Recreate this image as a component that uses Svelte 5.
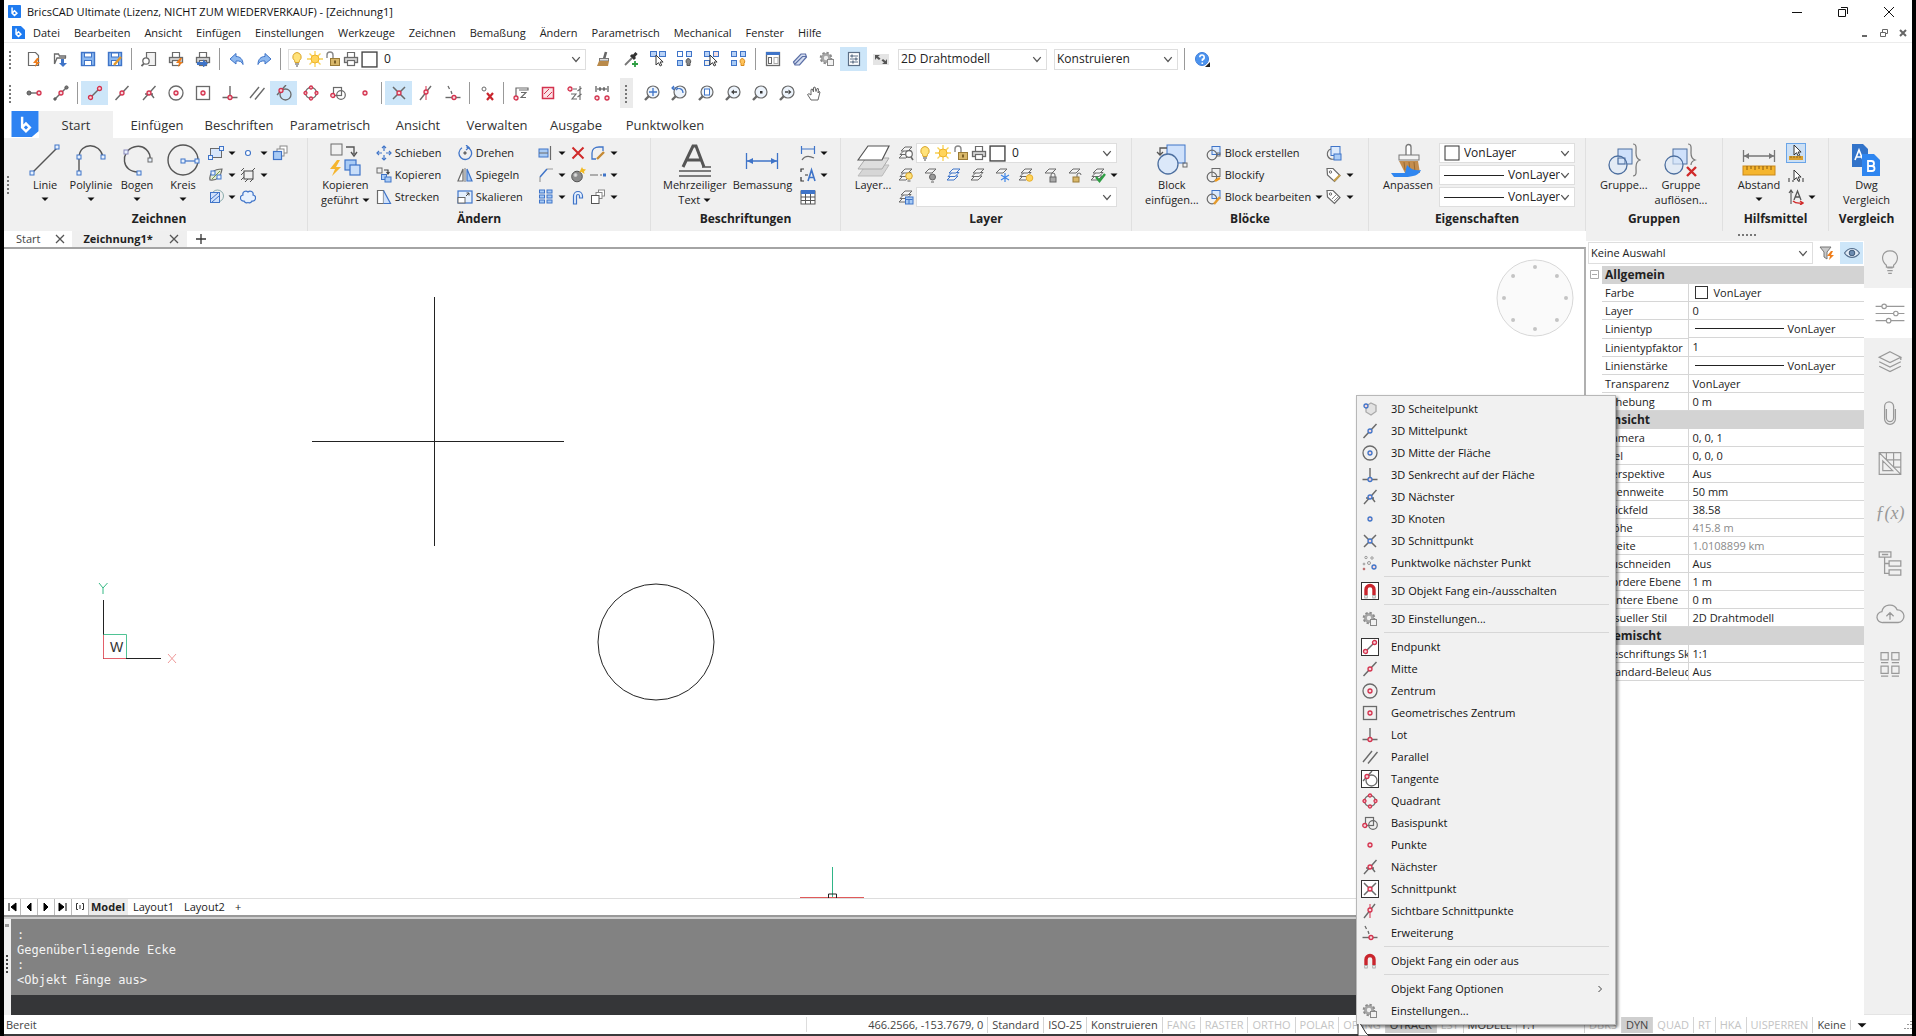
<script>
  const RED = '#d4324e', GRAY = '#6a6a6a', BLUE = '#3f74c8', LIGHT = '#a9cbf5', GOLD = '#f5b52e', BROWN = '#b98a4a';

  const p = (d, c = GRAY, w = 1, f = 'none') => `<path d="${d}" stroke="${c}" stroke-width="${w}" fill="${f}"/>`;
  const fill = (d, c = GRAY) => `<path d="${d}" fill="${c}"/>`;
  const dot = (x, y, c = RED, r = 2) => `<circle cx="${x}" cy="${y}" r="${r}" fill="#f6d5da" stroke="${c}" stroke-width="1.3"/>`;
  const ring = (x, y, r, c = GRAY, w = 1, f = 'none') => `<circle cx="${x}" cy="${y}" r="${r}" fill="${f}" stroke="${c}" stroke-width="${w}"/>`;
  const box = (x, y, w, h, c = GRAY, f = 'none', s = 1) => `<rect x="${x}" y="${y}" width="${w}" height="${h}" fill="${f}" stroke="${c}" stroke-width="${s}"/>`;
  const node = (x, y, c = BLUE) => box(x - 2, y - 2, 4, 4, c, '#e8f1fd');

  const snap = (kind, c = RED) => ({
    end: p('M4 12L12 4', GRAY, 1.5) + dot(3.5, 12.5, c) + dot(12.5, 3.5, c),
    mid: p('M1.500 15L14.500 1', GRAY, 1.5) + dot(8, 8, c),
    near: p('M2 15L14.500 1M10 9l3 4M4 9h8', GRAY, 1.4) + dot(8, 8, c),
    center: ring(8, 8, 7, GRAY, 1.3) + dot(8, 8, c),
    geo: box(1.5, 1.5, 13, 13, GRAY, 'none', 1.3) + dot(8, 8, c),
    perp: p('M8 1V12M.5 12.500H15.500', GRAY, 1.4) + dot(8, 12.5, c),
    par: p('M1 13L10 2M6 14.500L15.500 3', GRAY, 1.4),
    tan: ring(9.5, 9.5, 5.5, GRAY, 1.3) + p('M1 10L10 0', GRAY, 1.4) + dot(5, 5.5, c),
    quad: ring(8, 8, 5.5, GRAY, 1.3) + dot(8, 2.5, c, 1.5) + dot(8, 13.5, c, 1.5) + dot(2.5, 8, c, 1.5) + dot(13.5, 8, c, 1.5),
    base: box(3.5, 2.5, 8, 8, GRAY, 'none', 1.2) + ring(11, 10, 4.3, GRAY, 1.2) + dot(2.8, 10.5, c),
    point: dot(8, 8, c),
    cross: p('M2 2L14 14M14 2L2 14', GRAY, 1.5) + dot(8, 8, c),
    app: p('M2 15L13 1', GRAY, 1.4) + p('M8 1v14', c, 1) + dot(8, 7, c),
    ext: p('M3 1l1.500 3M6 6l1 3', GRAY, 1.3) + p('M.5 12.500H15.500', GRAY, 1.4) + dot(9, 12.5, c)
  })[kind];

  const gear = `<circle cx="7" cy="7" r="5" fill="#aaa" stroke="#8a8a8a" stroke-width="2.600" stroke-dasharray="2.200 1.700"/><circle cx="7" cy="7" r="4.500" fill="#a6a6a6"/><circle cx="7" cy="7" r="2.200" fill="#eee"/>` + box(8.5, 8.5, 6, 6, '#888', '#f2f2f2');
  const magnet = p('M4 12V6.500a4 4 0 0 1 8 0V12', '#c9252d', 3.4) + box(2.8, 12.5, 2.4, 2.5, '#999', '#fff', .8) + box(10.8, 12.5, 2.4, 2.5, '#999', '#fff', .8);
  const bulb = p('M8 1.500a4.500 4.500 0 0 0-2.500 8l.5 2h4l.5-2A4.500 4.500 0 0 0 8 1.500Z', '#d9a52b', 1, '#ffe27a') + p('M6 13h4M7 15h2', '#888', 1.3);
  const sun = p('M8 0V16M0 8H16M2.500 2.500L13.500 13.500M13.500 2.500L2.500 13.500', '#f7d154', 1.3) + ring(8, 8, 4, '#f0b429', 1, '#ffd45a');
  const lock = p('M2 7V4a3 3 0 0 1 6 0V8', '#888', 1.4) + box(5.5, 7.5, 9, 7, '#9a7b37', '#d8b76a') + fill('M9 9.500h2v3h-2z', '#7c6026');
  const printer = p('M4.500 6V1.500h7V6', GRAY, 1.2, '#fff') + box(1.5, 6.5, 13, 5, GRAY, '#d8d8d8', 1.3) + box(4.5, 9.5, 7, 5, GRAY, '#fff', 1.2);
  const swatch = box(1, 1, 14, 14, '#444', '#fff', 1.3);
  const cursor = (x, y) => p(`M${x} ${y}v10l2.500-2.300l1.700 3.300l1.500-.8l-1.600-3.200h3Z`, '#333', 1, '#fff');
  const quads = (a, b, c) => box(.5, .5, 5, 5, BLUE, a) + box(9.5, .5, 5, 5, BLUE, b) + box(.5, 9.5, 5, 5, BLUE, c);
  const lens = (inner) => p('M5.500 10.500L1 15', GRAY, 2.4) + ring(9, 7, 6, GRAY, 1.2, '#edf4fc') + inner;
  const sheet = (x, y, c = GRAY, f = '#f4f4f4') => p(`M${x} ${y + 4}L${x + 4} ${y}H${x + 11}L${x + 7} ${y + 4}Z`, c, 1, f);
  const sheets = (c = GRAY) => sheet(1, 9, c) + sheet(2, 5.5, c) + sheet(3, 2, c);

  const ic = {
    fresh: p('M2.500 1.500h7l3 3v10h-10Z', GRAY, 1.2, '#fff') + fill('M11 7l-4 5h3l-1 4l5-5h-3l2-4z', '#ef7d1a'),
    open: p('M1.500 13V3h4l1 2h6v2M1.500 13L4 7h9', GRAY, 1.3) + fill('M8 8h3v4h3l-4 4l-4-4h2z', BLUE),
    save: box(1.5, 1.5, 13, 13, BLUE, '#8bb8f0', 1.4) + box(4.5, 2, 7, 4, BLUE, '#fff') + box(4.5, 9.5, 7, 5, BLUE, '#fff'),
    saveas: box(1.5, 1.5, 13, 13, BLUE, '#8bb8f0', 1.4) + box(4.5, 2, 7, 4, BLUE, '#fff') + box(4.5, 9.5, 7, 5, BLUE, '#fff') + p('M7 14L14 6', '#e59a2b', 2.4),
    preview: p('M5.500 9V1.500h9v13h-7', GRAY, 1.2, '#f2f2f2') + ring(5, 10, 3.2, GRAY, 1.3, '#fff') + p('M3 12.500L.5 15', GRAY, 1.8),
    print: printer + fill('M12 7l-4 5h3l-1 4l5-5h-3l2-4z', '#ef7d1a'),
    publish: printer + fill('M2 11h6V8.500l5 4l-5 4V14H2z', BLUE),
    undo: p('M7 2.500L1 8l6 5V10c4-.5 6 1 7 3.500C14 8 11 5.500 7 5.500Z', BLUE, 1, '#8db8ef'),
    redo: p('M9 2.500L15 8l-6 5V10c-4-.5-6 1-7 3.500C2 8 5 5.500 9 5.500Z', BLUE, 1, '#8db8ef'),
    match: p('M10 1L8 8', '#666', 2.6) + box(3.5, 7.5, 9, 2.5, '#777', '#ddd') + fill('M3 10h10l-1 5H1z', BROWN),
    picker: p('M2 14L9 7', '#777', 1.8) + p('M8 4l4 4M10 6l3.500-4', '#333', 3) + p('M9 13h6M12 10v6', '#2f9e44', 1.8),
    selA: box(.5, .5, 6, 5, BLUE, '#b9d2f6') + box(9.5, .5, 6, 5, BLUE, '#b9d2f6') + cursor(6, 4),
    selB: quads('#fff', '#d7e5fa', LIGHT) + p('M11 7.500a3 3 0 0 0-1 5v2h3v-2a3 3 0 0 0-2-5', '#555', 1, '#888'),
    selC: quads('#b9d2f6', '#f3dde0', '#eee') + cursor(6, 4),
    selD: quads('#b9d2f6', '#b9d2f6', LIGHT) + p('M11 7.500a3 3 0 0 0-1 5v2h3v-2a3 3 0 0 0-2-5', '#d98b1c', 1, '#ffc35a'),
    panel: box(1.5, 1.5, 13, 13, GRAY, '#fff', 1.3) + fill('M1 1h14v3H1z', BLUE) + box(3.5, 6.5, 3, 6) + box(9, 6.5, 4, 6, '#aaa'),
    clip: p('M1.500 11L9 3h4.500l1 3L7.500 14H3Z', '#5b6fa5', 1.2, '#d6dff2') + p('M3 13L10.500 5.500h4', '#5b6fa5', 1.2),
    gear,
    props: box(2.5, 1.5, 11, 13, '#5c6f86', '#fff', 1.2) + p('M4 5h8M4 8h8M4 11h8', '#5c6f86') + p('M6 3.500v3M10 6.500v3M7 9.500v3', '#5c6f86', 1.4),
    swap: fill('M0 3h16v11H0z', '#e4e4e4') + fill('M2 4h5l-2 1.500l2.500 2l-1.500 1.500l-2.500-2L2 9zM14 13H9l2-1.500L8.500 9.500L10 8l2.500 2L14 8z', '#555'),
    help: ring(8, 8, 6.5, '#3d7edb', 1, '#4c93ee') + p('M5.800 6.200a2.200 2.200 0 1 1 2.600 2.200V10M8.300 11.500v1.500', '#fff', 1.6) + fill('M16 11v5h-5z', '#222'),
    tmp: p('M4 8h8', GRAY, 1.4) + ring(3, 8, 2, '#555', 1, '#777') + dot(13, 8),
    from: p('M2 14L14 2', GRAY, 1.4) + ring(13.500, 2.500, 1.6, '#555', 1, '#777') + ring(2, 14, 1.2, '#555', 1, '#777') + dot(8, 8),
    none: ring(5, 4, 2, GRAY) + p('M8 8l6 7M14 8l-6 7', '#c9252d', 2.2),
    z1: p('M3 11V3h12v2h-9', GRAY, 1.2) + p('M8 7.500h5l-5 5h5', GRAY, 1.1) + dot(3, 13),
    hatch: box(2.5, 2.5, 11, 11, RED, '#fbe3e6', 1.5) + p('M4 9L9 4M7 12L12 7', RED),
    z2: p('M6 4h4M13 1v14M10.500 6l4-3M10.500 12l4-3', GRAY, 1.1) + p('M4 9h5l-4 5h5', GRAY, 1.1) + dot(3, 4),
    gap: p('M2 1v6M14 1v6M3 4h10M6 2v4M10 2v4', '#444', 1.1) + dot(3, 13) + dot(13, 13),
    zE: lens(p('M9 3v8M5 7h8', BLUE, 1.3)), zR: lens(p('M5 5c3-3 7-1 7 3M1 3h6M3 1l-2 2l2 2', BLUE, 1.2)),
    zP: lens(box(6.5, 4, 5, 6, BLUE, '#fff')), zL: lens(fill('M6 7l3-2.500V9.500zM8 6.300h4v1.400H8z', '#444')),
    zC: lens(fill('M8 6h2.500v2.500H8z', '#333')), zN: lens(fill('M12.500 7l-3-2.500V9.500zM6 6.300h4v1.400H6z', '#444')),
    hand: p('M5 15L1.500 9.500l1.500-.8L5 10V4.500l1.300-.5L7.500 7V2.500L9 2l1 4.500l1-3l1.500.3L12 8l1-1.500l1 .5L12 15Z', '#666', 1, '#fff'),
    rect: box(2.5, 3.5, 11, 9, GRAY, '#d7e6fb') + node(2.5, 12.5) + node(13.5, 3.5),
    pt: ring(8, 8, 2.5, BLUE, 1.1, '#fff'),
    stack: box(8, 1, 7, 7, '#888', '#fff') + box(5, 4, 7, 7, '#888', '#fff') + box(1.5, 6.5, 8, 8, BLUE, LIGHT, 1.2),
    spline: p('M2 13C1 6 6 2 14 2C13 9 9 14 2 13Z', GRAY, 1.2, '#e3ead6') + node(5, 6) + node(11, 10) + p('M4 12L12 4', '#7a9a4a'),
    region: box(4, 4, 9, 8, '#444') + p('M1 4l3-3M1 8l3-3M1 13l3-3M5 15l3-3M10 15l3-3M12 4l3-3', '#555', 1),
    fillh: ring(9.500, 7, 6, '#8aa', 1) + box(2.500, 3.500, 9, 10, BLUE, '#cfe1fb') + p('M3 10L10 4M4 13L11 7', BLUE),
    cloud: p('M4 12a3 3 0 0 1-1-6a3 3 0 0 1 5-3a3 3 0 0 1 5 3a3 3 0 0 1-1 6a3 3 0 0 1-4 1.500a3 3 0 0 1-4-1.500Z', BLUE, 1.2, '#e8f1fd'),
    move: p('M8 1v5M8 10v5M1 8h5M10 8h5', BLUE, 1.2) + p('M6 3l2-2l2 2M6 13l2 2l2-2M3 6l-2 2l2 2M13 6l2 2l-2 2', BLUE, 1.2),
    copy: box(1, 1, 5, 5) + p('M8 3h4v3M10.500 5l1.500 2l1.500-2', '#444', 1.2) + box(5.5, 7.5, 5, 5, BLUE, LIGHT) + box(9, 10, 6, 5, BLUE, LIGHT),
    stretch: p('M1.500 1.500h6v13h-6Z', GRAY, 1.2, '#fff') + p('M7.500 1.500L14.500 14.500H7.500', BLUE, 1.2, '#cfe1fb'),
    rotate: p('M5 2.800A6.300 6.300 0 1 0 9.500 2', BLUE, 1.3) + p('M9 0L12 2.500L9 5', BLUE, 1.2) + ring(8, 8, 1.2, GRAY, 1, '#666'),
    mirror: p('M6 2v12H1Z', GRAY, 1.2, '#fff') + p('M10 2v12h5Z', BLUE, 1.2, LIGHT) + p('M8 1v14', '#555', .8),
    scale: box(1, 2, 14, 12, BLUE, '#e4effc', 1.2) + box(1, 8.5, 7, 5.5, GRAY, '#fff') + p('M9 7l3-3M9.500 4H12v2.500', '#444'),
    trim: box(1, 4, 9, 8, BLUE, LIGHT) + p('M1 8h9', GRAY) + p('M12.500 1v14', GRAY, 1.2),
    del: p('M2.500 2.500L13.500 13.500M13.500 2.500L2.500 13.500', '#d02a2a', 2),
    fillet: p('M6 14H2V8C2 4 5 2 9 2h4v4', BLUE, 1.3) + p('M7 14L14 7', '#c58a35', 2.4),
    chamfer: p('M2 15V10M9 2h6', '#999', 1.2) + p('M2 10L9 2', BLUE, 1.5),
    bomb: ring(7, 9.500, 5.300, '#555', 1, '#8c8c8c') + ring(5.500, 8, 1.5, '#ccc', 1, '#ddd') + fill('M12 0l1 2l3 .5l-2 2l.5 2.500l-3-2l-2 .5l1-2.500z', '#f2b91f'),
    dashl: p('M0 8h8M10 8h2', GRAY, 1.2) + fill('M13 6.500h3v3h-3z', BLUE),
    array: [1.5, 6.5, 11.5].map((y) => box(1.5, y - .5, 5, 3, BLUE, LIGHT) + box(9, y - .5, 5, 3, BLUE, LIGHT)).join(''),
    offset: p('M3.500 15V7a4.500 4.500 0 0 1 9 0v2H9.500V7a1.500 1.500 0 0 0-3 0V15Z', BLUE, 1.2, '#e6f0fd'),
    order: box(8.5, 1, 6, 6, '#888', '#fff') + box(6, 3.5, 6, 6, '#888', '#fff') + box(1.5, 6.5, 7.5, 8, '#555', '#fff'),
    dimq: p('M1.500 1v8M14.500 1v8M2 4h12', BLUE, 1.2) + p('M2 15c3-5 8-4 12-2', GRAY, 1.2),
    leader: p('M1 5V2h3M1 10v4h3M5 8h3', '#333', 1.2) + p('M8 14L11.500 3L15 14M9 10.500h5', BLUE, 1.6),
    table: box(1, 2, 14, 13, '#555', '#fff') + fill('M1 1h14v4H1z', BLUE) + p('M1 8h14M1 11.500h14M5.500 5v10M10.500 5v10', '#555'),
    lsearch: sheets() + ring(11, 9, 3.3, GRAY, 1.2, '#fff') + p('M13 12l2 3', GRAY, 1.6),
    lbulb: sheets() + ring(11, 9, 3.3, '#d9a52b', 1, '#ffe27a') + p('M9.500 14h3', '#888', 1.4),
    loff: sheet(3, 2) + ring(10.500, 10, 3, '#666', 1, '#999') + p('M9 15h3', '#888', 1.4),
    lblue: sheets(BLUE), lgray: sheets(),
    lfreeze: sheet(2, 2) + p('M11 6v9M7 8l8 5M15 8l-8 5', '#3f86e8', 1.2),
    lsun: sheets() + ring(11.500, 11, 3.3, '#eab02c', 1, '#ffd45a'),
    llock: sheet(3, 2) + p('M9 10V8a2 2 0 0 1 4 0v2', '#666') + box(8, 10, 6, 5, '#666', '#aaa'),
    lunlock: sheet(3, 2) + p('M11 10V8a2 2 0 0 1 4 0', '#666') + box(7, 10, 6, 5, '#9a7b37', '#d8b76a'),
    lcheck: sheets() + p('M6 10l3.500 4L15 7', '#2f9e44', 2.4),
    lsave: sheets() + box(7.500, 8, 7.500, 7, BLUE, LIGHT) + p('M7.500 10.500h7M11 10v5', BLUE),
    bnew: box(6, 1.5, 8, 8, BLUE, '#dceafc') + ring(6, 10, 4.8, GRAY, 1.2, 'none') + box(11, 8, 3, 3),
    bconv: box(6, 1.5, 8, 8, GRAY, '#eee') + ring(6, 10, 4.8, GRAY, 1.2) + p('M9 14l5-3', '#ef9a1a', 2.4),
    bedit: box(6, 1.5, 8, 8, BLUE, '#dceafc') + ring(6, 10, 4.8, GRAY, 1.2) + p('M8 15l6-7', '#e59a2b', 2.4),
    bsave: box(5, 1.5, 9, 9, BLUE, '#dceafc') + p('M5 4a5 5 0 1 0 3 10', GRAY, 1.2) + box(8, 9, 7, 6, BLUE, LIGHT),
    tagE: p('M1 1.500h6l7 7l-5.500 6L1.500 8Z', GRAY, 1.2, '#fff') + ring(4.500, 5, 1.2) + p('M8 14l6-6', '#c9a14a', 2),
    tag: p('M1 1.500h6l7 7l-5.500 6L1.500 8Z', GRAY, 1.2, '#fff') + ring(4.500, 5, 1.2) + p('M6 10l4-4M8 12l4-4', '#888'),
    mA: cursor(6, 0) + fill('M1 11h14v4H1z', '#d9a032') + p('M3 11v2M6 11v2M9 11v2M12 11v2', '#7c5a15', .8),
    mB: p('M1 11v4M5 13v2M11 13v2M15 11v4', '#333', 1) + cursor(6, 3),
    mC: p('M3 15V2M1 4l2-3l2 3', '#555', 1.1) + p('M6 11L9.500 2L13 11M7 8h5', '#555', 1.3) + p('M5 12c3 3 6 2 9 2M12 12l3 2l-3 2', '#d02a2a', 1.4),
    filter: p('M1 2h11l-4 5v7l-3-2V7Z', '#777', 1, '#c9c9c9') + fill('M12 6l-4 5h3l-1 4l5-5h-3l2-4z', '#ef7d1a'),
    eye: p('M.500 8c4-6 11-6 15 0c-4 6-11 6-15 0Z', '#56708f', 1.2, '#dfe9f4') + ring(8, 8, 2.8, '#3d5777', 1, '#6d8cb0'),
    vertex3: p('M9 2l5 2.500v6L9 14l-5-3V5Z', '#aaa', 1.3, '#e2e2e2') + dot(4, 5, BLUE),
    cloudpts: ring(4, 2.5, 1.2, '#999') + ring(10, 3, 1.2, '#999') + ring(7, 8, 1.5, '#999') + ring(2, 9, .9, '#999') + ring(2, 14, .9, '#b66', 1, '#b66') + dot(12, 12, BLUE),
    magnet
  };

  const big = {
    line: p('M4 30L29 5', '#555', 1.4) + node(4, 30) + node(29, 4),
    poly: p('M5 30V14C6 -1 26 -1 29 14', '#555', 1.4) + node(5, 30) + node(5, 14) + node(29, 14),
    arc: p('M19 29C1 30 0 8 14 4C24 1 31 9 30 17', '#555', 1.4) + node(19, 30) + node(30, 17, GRAY) + node(6, 9, '#88b'),
    circle: ring(17, 17, 15, '#555', 1.4) + p('M17 18H31', BLUE, 1.2) + node(17, 18) + node(31, 18),
    gcopy: box(3, 1, 11, 11) + p('M18 4h8v7M23 9l3 4l3-4', '#555', 1.4) + fill('M9 17l-7 9h5l-3 7l9-9h-5l4-7z', GOLD) + box(17, 17, 11, 10, BLUE, LIGHT, 1.2) + box(22, 22, 10, 10, BLUE, '#c9def9', 1.2),
    mtext: p('M5 24L15 3h3l8 21M9 17h15', '#555', 3) + p('M1 28h32M1 33h32M24 24h9', '#555', 1.4),
    dim: p('M1.500 10v16M32.500 10v16M2 18h30', BLUE, 1.3) + fill('M2 18l6-3v6zM32 18l-6-3v6z', BLUE),
    layer: p('M2 33L10 22H33L26 33Z', '#bbb', 1, '#d6d6d6') + p('M2 26L10 15H33L26 26Z', '#aaa', 1, '#dedede') + p('M2 17L12 3H33L26 17Z', '#555', 1.2, '#fff'),
    block: box(12, 2, 18, 18, BLUE, '#cfe1fb') + ring(13, 21, 10, '#4d6f9f', 1.3, '#dbe8f9') + p('M12 5H5v7M2 9l3 3l3-3', '#555', 1.3) + box(28, 20, 4, 4),
    brush: p('M15 12V4a2 2 0 0 1 5 0V12', '#777', 1.3, '#fff') + box(8, 12, 20, 5, '#777', '#f3f3f3') + fill('M8 18h19l2 12H14z', '#c48d4e') + p('M13 19l1 8M18 19l1 10M23 19l1 10', '#9a6a30') + fill('M0 30h14l2-8c4 5 10 6 14 5c-2 5-8 7-16 7H3z', '#2f86f0'),
    group: box(11, 6, 14, 15, '#4d6f9f', '#cfe1fb') + ring(11, 22, 9, '#4d6f9f', 1.3, '#dbe8f999') + box(11, 15, 7, 6, '#4d6f9f') + p('M26 1c4 0 3 4 3 9c0 4 1 6 4 7c-3 1-4 3-4 7c0 5 1 9-3 9', '#777', 1.2),
    ungroup: box(9, 6, 14, 15, '#4d6f9f', '#cfe1fb') + ring(10, 22, 9, '#4d6f9f', 1.3, '#dbe8f999') + p('M24 1c4 0 3 4 3 9c0 4 1 6 4 7c-3 1-4 3-4 5', '#777', 1.2) + p('M23 24l9 9M32 24l-9 9', '#d02a2a', 2.4),
    dist: p('M1.500 7v12M32.500 7v12M2 13h30', '#777', 1.3) + fill('M2 13l5-3v6zM32 13l-5-3v6z', '#777') + box(1, 23, 32, 9, '#c9881a', GOLD) + p('M5 23v4M9 23v3M13 23v4M17 23v3M21 23v4M25 23v3M29 23v4', '#8a5b0c'),
    dwg: fill('M3 1h11l5 5v18H3z', '#3273c9') + p('M6 17l4-10l4 10M7.500 14h5', '#fff', 1.6) + fill('M13 11h12l6 6v16H13z', '#2f86f0') + p('M19 18v10h4a2.500 2.500 0 0 0 0-5h-4h3.500a2.500 2.500 0 0 0 0-5Z', '#fff', 1.8)
  };

  const side = [
    p('M17 21h6M17 24h6M18 27h4M16 18C9 12 11 2 20 2s11 10 4 16v2h-8Z', '#999', 1.3),
    p('M4 8h7M16 8h20M4 16h20M29 16h7M4 24h12M21 24h15', '#999', 1.3) + ring(13.500, 8, 2.500, '#999', 1.3) + ring(26.500, 16, 2.500, '#999', 1.3) + ring(18.500, 24, 2.500, '#999', 1.3),
    p('M20 3L32 9L20 15L8 9ZM8 14l12 6l12-6M8 19l12 6l12-6M32 9v3', '#999', 1.4),
    p('M16 11v10a4 4 0 0 0 8 0V8a5 5 0 0 0-10 0v14a6 6 0 0 0 12 0V11', '#999', 1.4),
    p('M8 4h24v24H8ZM8 4L32 28M16 4v8M24 4v16M16 12h16M24 20h8M12 13v11h11Z', '#999', 1.3),
    '',
    p('M8 3h13v6H8ZM11 6h7M14 9v18h5M14 16h5M19 13h13v6H19ZM19 23h13v6H19Z', '#999', 1.4),
    p('M13 26H12a6 6 0 0 1-1-12a9 9 0 0 1 17-2a7 7 0 0 1 1 14H13M20 23V15M16 19l4-4l4 4', '#999', 1.4),
    p('M10 4h8v8h-8ZM22 4h8v8h-8ZM10 19h8v8h-8ZM22 19h8v8h-8ZM10 15h8M22 15h8M10 30h8M22 30h8', '#999', 1.3)
  ];
  const sideNames = ['Tipps', 'Eigenschaften', 'Layer', 'Anhänge', 'Schraffur', 'Parameter', 'Struktur', 'Cloud', 'Komponenten'];

  const menus = ['Datei', 'Bearbeiten', 'Ansicht', 'Einfügen', 'Einstellungen', 'Werkzeuge', 'Zeichnen', 'Bemaßung', 'Ändern', 'Parametrisch', 'Mechanical', 'Fenster', 'Hilfe'];
  const bar1 = ['fresh', 'open', 'save', 'saveas', '|', 'preview', 'print', 'publish', '|', 'undo', 'redo', '|'];
  const bar1b = ['match', 'picker', 'selA', 'selB', 'selC', 'selD', '|', 'panel', 'clip', 'gear', '*props', 'swap'];
  const bar2 = ['tmp', 'from', '|', '*end', 'mid', 'near', 'center', 'geo', 'perp', 'par', '*tan', 'quad', 'base', 'point', '|', '*cross', 'app', 'ext', '|', 'none', '|', 'z1', 'hatch', 'z2', 'gap'];
  const bar3 = ['zE', 'zR', 'zP', 'zL', 'zC', 'zN', 'hand'];
  const tabs = ['Start', 'Einfügen', 'Beschriften', 'Parametrisch', 'Ansicht', 'Verwalten', 'Ausgabe', 'Punktwolken'];
  const layerTools = ['lbulb', 'loff', 'lblue', 'lgray', 'lfreeze', 'lsun', 'llock', 'lunlock', 'lcheck'];

  const props = [
    ['Allgemein'], ['Farbe', 'VonLayer', 'swatch'], ['Layer', '0'], ['Linientyp', 'VonLayer', 'line'], ['Linientypfaktor', '1'],
    ['Linienstärke', 'VonLayer', 'line'], ['Transparenz', 'VonLayer'], ['Erhebung', '0 m'],
    ['Ansicht'], ['Kamera', '0, 0, 1'], ['Ziel', '0, 0, 0'], ['Perspektive', 'Aus'], ['Brennweite', '50 mm'], ['Blickfeld', '38.58'],
    ['Höhe', '415.8 m', 'dim'], ['Breite', '1.0108899 km', 'dim'], ['Zuschneiden', 'Aus'], ['Vordere Ebene', '1 m'], ['Hintere Ebene', '0 m'], ['Visueller Stil', '2D Drahtmodell'],
    ['Gemischt'], ['Beschriftungs Sk', '1:1'], ['Standard-Beleuc', 'Aus']
  ];

  const popup = [
    ['3D Scheitelpunkt', ic.vertex3], ['3D Mittelpunkt', snap('mid', BLUE)], ['3D Mitte der Fläche', snap('center', BLUE)],
    ['3D Senkrecht auf der Fläche', snap('perp', BLUE)], ['3D Nächster', snap('near', BLUE)], ['3D Knoten', snap('point', BLUE)],
    ['3D Schnittpunkt', snap('cross', BLUE)], ['Punktwolke nächster Punkt', ic.cloudpts], null,
    ['3D Objekt Fang ein-/ausschalten', magnet, true], null, ['3D Einstellungen...', gear], null,
    ['Endpunkt', snap('end'), true], ['Mitte', snap('mid')], ['Zentrum', snap('center')], ['Geometrisches Zentrum', snap('geo')],
    ['Lot', snap('perp')], ['Parallel', snap('par')], ['Tangente', snap('tan'), true], ['Quadrant', snap('quad')], ['Basispunkt', snap('base')],
    ['Punkte', snap('point')], ['Nächster', snap('near')], ['Schnittpunkt', snap('cross'), true], ['Sichtbare Schnittpunkte', snap('app')],
    ['Erweiterung', snap('ext')], null, ['Objekt Fang ein oder aus', magnet], null,
    ['Objekt Fang Optionen', '', false, true], ['Einstellungen...', gear]
  ];

  const stateA = [['Standard', 1], ['ISO-25', 1], ['Konstruieren', 1], ['FANG', 0], ['RASTER', 0], ['ORTHO', 0], ['POLAR', 0], ['OFANG', 0], ['OTRACK', 2], ['LST', 0], ['MODELL', 1], ['1:1', 1]];
  const stateB = [['DBKS', 0], ['DYN', 2], ['QUAD', 0], ['RT', 0], ['HKA', 0], ['UISPERREN', 0], ['Keine', 1]];
</script>

{#snippet icon(code, cls = 'i16')}
  <svg class={cls} viewBox="0 0 16 16" aria-hidden="true">{@html code}</svg>
{/snippet}

{#snippet chev()}
  <svg class="chev" viewBox="0 0 8 8" aria-hidden="true"><path d="M1 2.500L4 6L7 2.500" fill="none" stroke="#555" /></svg>
{/snippet}

{#snippet tri()}
  <svg class="tri" viewBox="0 0 8 8" aria-hidden="true"><path d="M.5 2.500h7L4 6z" fill="#111" /></svg>
{/snippet}

{#snippet tools(list)}
  {#each list as t}
    {#if t === '|'}
      <span class="sep"></span>
    {:else}
      {@const n = t.replace('*', '')}
      <button class="tool" class:on={t[0] === '*'} aria-label={n}>{@render icon(ic[n] ?? snap(n))}</button>
    {/if}
  {/each}
{/snippet}

{#snippet bigBtn(name, lines, arrow = '')}
  <button class="big">
    <svg class="i34" viewBox="0 0 34 34" aria-hidden="true">{@html big[name]}</svg>
    <span>{lines[0]}</span>
    {#if lines[1] || arrow}
      <span class="second">{lines[1] ?? ''}{#if arrow}{@render tri()}{/if}</span>
    {/if}
  </button>
{/snippet}

{#snippet small(name, arrow = false, label = '', on = false)}
  <button class="small" class:lit={on} aria-label={label || name}>{@render icon(ic[name])}{#if label}<span>{label}</span>{/if}{#if arrow}{@render tri()}{/if}</button>
{/snippet}

{#snippet layerCombo()}
  <div class="combo layers">
    {@render icon(bulb)}{@render icon(sun)}{@render icon(lock)}{@render icon(printer)}{@render icon(swatch, 'i18')}
    <select aria-label="Aktueller Layer"><option>0</option></select>
    {@render chev()}
  </div>
{/snippet}

<div class="app">
  <header class="title">
    <svg class="i13" viewBox="0 0 16 16" aria-hidden="true"><rect width="16" height="16" rx="1" fill="#1f7bf0" /><path d="M5 3v7l3 3l3-3l-3-3l-3 3" stroke="#fff" stroke-width="1.800" fill="none" /></svg>
    <span class="name">BricsCAD Ultimate (Lizenz, NICHT ZUM WIEDERVERKAUF) - [Zeichnung1]</span>
    <div class="winctl">
      <button aria-label="Minimieren"><svg viewBox="0 0 12 12"><path d="M1 6.500h10" stroke="#111" /></svg></button>
      <button aria-label="Wiederherstellen"><svg viewBox="0 0 12 12"><path d="M1.500 3.500h7v7h-7zM4 1.500h6.500V8" stroke="#111" fill="none" /></svg></button>
      <button aria-label="Schließen"><svg viewBox="0 0 12 12"><path d="M1 1l10 10M11 1L1 11" stroke="#111" /></svg></button>
    </div>
  </header>

  <nav class="menubar">
    <svg class="i13" viewBox="0 0 16 16" aria-hidden="true"><path d="M0 0h11l5 5v11H0z" fill="#1f7bf0" /><path d="M5 3v7l3 3l3-3l-3-3l-3 3" stroke="#fff" stroke-width="1.800" fill="none" /></svg>
    {#each menus as m}<button>{m}</button>{/each}
    <div class="docctl">
      <button aria-label="Dokument minimieren"><svg viewBox="0 0 12 12"><path d="M3 9h5" stroke="#666" stroke-width="2" /></svg></button>
      <button aria-label="Dokument wiederherstellen"><svg viewBox="0 0 12 12"><path d="M2.500 5.500h5v4h-5zM4.500 5V2.500h5v4H8" stroke="#666" fill="none" /></svg></button>
      <button aria-label="Dokument schließen"><svg viewBox="0 0 12 12"><path d="M3 3l6 6M9 3L3 9" stroke="#666" stroke-width="2" /></svg></button>
    </div>
  </nav>

  <div class="bar first">
    <span class="grip"></span>
    {@render tools(bar1)}
    {@render layerCombo()}
    {@render tools(bar1b)}
    <div class="combo style"><select aria-label="Visueller Stil"><option>2D Drahtmodell</option></select>{@render chev()}</div>
    <div class="combo space"><select aria-label="Arbeitsbereich"><option>Konstruieren</option></select>{@render chev()}</div>
    {@render tools(['|', 'help'])}
  </div>

  <div class="bar">
    <span class="grip"></span>
    {@render tools(bar2)}
    <span class="grip mid"></span>
    {@render tools(bar3)}
  </div>

  <div class="tabs" role="tablist">
    <button class="logo" aria-label="BricsCAD"><svg viewBox="0 0 28 28"><path d="M0 0h28v21l-7 6H0z" fill="#2e83f2" /><path d="M11 6v11l4 4l4-4l-4-4l-4 4" stroke="#fff" stroke-width="2.500" fill="none" /></svg></button>
    {#each tabs as t, i}<button role="tab" aria-selected={i === 0} class:active={i === 0}>{t}</button>{/each}
  </div>

  <div class="ribbon">
    <span class="grip rg"></span>
    <div class="groups">
      <section>
        <div class="body g-draw">
          {@render bigBtn('line', ['Linie'], 'y')}
          {@render bigBtn('poly', ['Polylinie'], 'y')}
          {@render bigBtn('arc', ['Bogen'], 'y')}
          {@render bigBtn('circle', ['Kreis'], 'y')}
          <div class="col">{@render small('rect', true)}{@render small('spline', true)}{@render small('fillh', true)}</div>
          <div class="col">{@render small('pt', true)}{@render small('region', true)}{@render small('cloud')}</div>
          <div class="col">{@render small('stack')}</div>
        </div>
        <h2>Zeichnen</h2>
      </section>
      <section>
        <div class="body g-mod">
          {@render bigBtn('gcopy', ['Kopieren', 'geführt'], 'y')}
          <div class="col w81">{@render small('move', false, 'Schieben')}{@render small('copy', false, 'Kopieren')}{@render small('stretch', false, 'Strecken')}</div>
          <div class="col w81">{@render small('rotate', false, 'Drehen')}{@render small('mirror', false, 'Spiegeln')}{@render small('scale', false, 'Skalieren')}</div>
          <div class="col">{@render small('trim', true)}{@render small('chamfer', true)}{@render small('array', true)}</div>
          <div class="col">{@render small('del')}{@render small('bomb')}{@render small('offset')}</div>
          <div class="col">{@render small('fillet', true)}{@render small('dashl', true)}{@render small('order', true)}</div>
        </div>
        <h2>Ändern</h2>
      </section>
      <section>
        <div class="body g-ann">
          {@render bigBtn('mtext', ['Mehrzeiliger', 'Text'], 'y')}
          {@render bigBtn('dim', ['Bemassung'])}
          <div class="col">{@render small('dimq', true)}{@render small('leader', true)}{@render small('table')}</div>
        </div>
        <h2>Beschriftungen</h2>
      </section>
      <section>
        <div class="body g-lay">
          {@render bigBtn('layer', ['Layer...'])}
          <div class="col grow">
            <div class="line">{@render small('lsearch')}{@render layerCombo()}</div>
            <div class="line spread">{#each layerTools as l, i}{@render small(l, i === 8)}{/each}</div>
            <div class="line">{@render small('lsave')}<div class="combo"><select aria-label="Layerstatus"><option></option></select>{@render chev()}</div></div>
          </div>
        </div>
        <h2>Layer</h2>
      </section>
      <section>
        <div class="body g-blk">
          {@render bigBtn('block', ['Block', 'einfügen...'])}
          <div class="col">{@render small('bnew', false, 'Block erstellen')}{@render small('bconv', false, 'Blockify')}{@render small('bedit', true, 'Block bearbeiten')}</div>
          <div class="col">{@render small('bsave')}{@render small('tagE', true)}{@render small('tag', true)}</div>
        </div>
        <h2>Blöcke</h2>
      </section>
      <section>
        <div class="body g-prp">
          {@render bigBtn('brush', ['Anpassen'])}
          <div class="col grow">
            <div class="combo">{@render icon(box(1, 1, 14, 14, '#333', '#fff'))}<select aria-label="Farbe"><option>VonLayer</option></select>{@render chev()}</div>
            <div class="combo"><i class="rule"></i><select class="vl" aria-label="Linientyp"><option>VonLayer</option></select>{@render chev()}</div>
            <div class="combo"><i class="rule"></i><select class="vl" aria-label="Linienstärke"><option>VonLayer</option></select>{@render chev()}</div>
          </div>
        </div>
        <h2>Eigenschaften</h2>
      </section>
      <section>
        <div class="body g-grp">
          {@render bigBtn('group', ['Gruppe...'])}
          {@render bigBtn('ungroup', ['Gruppe', 'auflösen...'])}
        </div>
        <h2>Gruppen</h2>
      </section>
      <section>
        <div class="body g-utl">
          {@render bigBtn('dist', ['Abstand'], 'y')}
          <div class="col">{@render small('mA', false, '', true)}{@render small('mB')}{@render small('mC', true)}</div>
        </div>
        <h2>Hilfsmittel</h2>
      </section>
      <section>
        <div class="body g-cmp">{@render bigBtn('dwg', ['Dwg', 'Vergleich'])}</div>
        <h2>Vergleich</h2>
      </section>
    </div>
  </div>

  <div class="main">
    <div class="work">
      <div class="doctabs">
        <button>Start</button><button class="x" aria-label="Start schließen"><svg viewBox="0 0 10 10"><path d="M1 1l8 8M9 1L1 9" stroke="#555" stroke-width="1.300" /></svg></button>
        <button class="cur">Zeichnung1*</button><button class="x lit2" aria-label="Zeichnung1 schließen"><svg viewBox="0 0 10 10"><path d="M1 1l8 8M9 1L1 9" stroke="#555" stroke-width="1.300" /></svg></button>
        <button class="x" aria-label="Neue Zeichnung"><svg viewBox="0 0 10 10"><path d="M0 5h10M5 0v10" stroke="#333" stroke-width="1.300" /></svg></button>
      </div>
      <div class="canvas">
        <svg class="drawing" aria-label="Zeichnung">
          <g fill="none" stroke="#222" shape-rendering="crispEdges">
            <path d="M430.500 48V297M308 192.500H560" />
            <path d="M99.500 351V409.500H157" />
          </g>
          <circle cx="652" cy="393" r="58" fill="none" stroke="#222" />
          <path d="M99.500 385.500H122.500V409" fill="none" stroke="#4fc394" />
          <path d="M99.500 386V409.500H122" fill="none" stroke="#e2606a" />
          <text x="106" y="403" class="wcs">W</text>
          <path d="M95 334l4 5v6M103.500 334l-4.500 5" fill="none" stroke="#35b984" />
          <path d="M164 405l8 9M172 405l-8 9" fill="none" stroke="#ef9a9a" />
          <path d="M828.500 618v30" stroke="#2fb587" />
          <path d="M796 648.500h64" stroke="#e05a5a" />
          <path d="M824.500 649v-4h8v4" fill="none" stroke="#222" />
        </svg>
        <svg class="look" viewBox="0 0 78 78" aria-hidden="true">
          <circle cx="39" cy="39" r="38" fill="#fafafa" stroke="#d8d8d8" />
          {#each [0, 45, 90, 135, 180, 225, 270, 315] as a}
            <circle cx={39 + 31 * Math.cos((a * Math.PI) / 180)} cy={39 + 31 * Math.sin((a * Math.PI) / 180)} r="2" fill="#c4c4c4" />
          {/each}
        </svg>
      </div>
      <div class="sheets">
        {#each ['M2 1v8M9 1L4 5l5 4z', 'M7 1L3 5l4 4z', 'M3 1l4 4l-4 4z', 'M8 1v8M1 1l5 4l-5 4z'] as d}
          <button class="nav" aria-label="Blättern"><svg viewBox="0 0 10 10"><path {d} fill="#000" stroke="#000" /></svg></button>
        {/each}
        <button class="nav" aria-label="Liste"><svg viewBox="0 0 10 10"><path d="M3 1.500H1.500v6H3M7 1.500h1.500v6H7M5 3v4" fill="none" stroke="#333" /></svg></button>
        <button class="model">Model</button><button>Layout1</button><button>Layout2</button><button>+</button>
      </div>
      <div class="cmd">
        <div class="cmdgrip"><svg viewBox="0 0 7 76"><path d="M1 5h4v3H1z" fill="#999" /><path d="M3 36v20" stroke="#444" stroke-width="2" stroke-dasharray="2 2" /></svg></div>
        <div class="console">
          <div class="log"><p>:</p><p>Gegenüberliegende Ecke</p><p>:</p><p>&lt;Objekt Fänge aus&gt;</p></div>
          <input aria-label="Befehlszeile" />
        </div>
      </div>
    </div>

    <aside class="panel">
      <div class="phandle"></div>
      <div class="picker">
        <div class="combo sel"><select aria-label="Auswahl"><option>Keine Auswahl</option></select>{@render chev()}</div>
        <button aria-label="Filter">{@render icon(ic.filter)}</button>
        <button class="on" aria-label="Anzeigen">{@render icon(ic.eye)}</button>
      </div>
      <table>
        <colgroup><col class="c1" /><col class="c2" /><col /></colgroup>
        <tbody>
          {#each props as [k, v, kind]}
            {#if v === undefined}
              <tr class="head"><td class="gut"><svg viewBox="0 0 9 9"><path d="M.5.5h8v8h-8zM2 4.500h5" fill="#fff" stroke="#aaa" /></svg></td><th colspan="2">{k}</th></tr>
            {:else}
              <tr>
                <td class="gut"></td><th scope="row">{k}</th>
                <td class={kind}>{#if kind === 'swatch'}<i class="sw"></i>{:else if kind === 'line'}<i class="ln"></i>{/if}{v}</td>
              </tr>
            {/if}
          {/each}
        </tbody>
      </table>
    </aside>

    <nav class="side">
      {#each side as s, i}
        <button class:active={i === 1} aria-label={sideNames[i]}>
          {#if s}<svg viewBox="0 0 40 32">{@html s}</svg>{:else}<em>ƒ(x)</em>{/if}
        </button>
      {/each}
    </nav>
  </div>

  <footer>
    <span class="msg">Bereit</span>
    <span class="coord">466.2566, -153.7679, 0</span>
    {#each stateA as [t, s]}<button class:off={s === 0} class:pressed={s === 2}>{t}</button>{/each}
    <span class="auto"></span>
    {#each stateB as [t, s]}<button class:off={s === 0} class:pressed={s === 2}>{t}</button>{/each}
    <button class="more" aria-label="Mehr">{@render tri()}</button>
    <svg class="size" viewBox="0 0 10 10" aria-hidden="true"><path d="M9 1v1M6 4v1M9 4v1M3 8v1M6 8v1M9 8v1" stroke="#999" stroke-width="2" /></svg>
  </footer>

  <div class="popup" role="menu">
    {#each popup as item}
      {#if item}
        <button role="menuitem">
          <span class="pic" class:boxed={item[2]}>{#if item[1]}{@render icon(item[1])}{/if}</span>
          <span>{item[0]}</span>
          {#if item[3]}<svg class="sub" viewBox="0 0 8 8" aria-hidden="true"><path d="M2.500 1L5.500 4L2.500 7" fill="none" stroke="#444" /></svg>{/if}
        </button>
      {:else}
        <hr />
      {/if}
    {/each}
  </div>
  <svg class="mouse" viewBox="0 0 12 12" aria-hidden="true"><path d="M1 -4V12L12 12L9 9Z" fill="#fff" stroke="#333" /></svg>
</div>

<style>
  :global(body) { background: #000; }
  :global(body), button, select, input, table { font-family: "Open Sans", "Noto Sans", sans-serif; }
  .app { position: relative; box-sizing: border-box; height: 100vh; display: flex; flex-direction: column; overflow: hidden; background: #fff; border: 0 solid #000; border-width: 0 4px; color: #222; font-size: 12px; }
  button { margin: 0; padding: 0; border: 0; background: none; color: inherit; font-size: 12px; line-height: 16px; white-space: nowrap; }
  svg { display: block; flex: none; }
  .i13 { width: 13px; height: 13px; }
  .i16 { width: 16px; height: 16px; }
  .i18 { width: 17px; height: 17px; }
  .i34 { width: 34px; height: 34px; }
  .chev { width: 10px; height: 10px; }
  .tri { width: 8px; height: 8px; }

  .title { flex: none; height: 23px; display: flex; align-items: center; padding-left: 4px; gap: 6px; }
  .name { font-size: 11px; line-height: 20px; color: #111; }
  .winctl { margin-left: auto; display: flex; }
  .winctl button { width: 46px; height: 20px; display: grid; place-items: center; }
  .winctl svg { width: 12px; height: 12px; }

  .menubar { flex: none; height: 19px; display: flex; align-items: center; padding-left: 8px; border-bottom: 1px solid #ececec; }
  .menubar > button { padding: 0 7px; font-size: 11px; }
  .menubar > .i13 { margin-right: 1px; height: 15px; }
  .docctl { margin-left: auto; display: flex; }
  .docctl button { width: 19px; height: 17px; display: grid; place-items: center; }
  .docctl svg { width: 12px; height: 12px; }

  .bar { flex: none; height: 35px; display: flex; align-items: center; }
  .bar.first { height: 32px; }
  .grip { flex: none; width: 13px; height: 30px; margin-right: 3px; background: repeating-linear-gradient(#777 0 2px, transparent 2px 4px) 5px 7px / 2px 18px no-repeat; }
  .grip.mid { width: 13px; margin: 0 5px; background-color: #ebebeb; }
  .tool { width: 27px; height: 24px; display: grid; place-items: center; }
  .tool.on { background: #cde6f9; }
  .sep { flex: none; width: 7px; height: 22px; background: linear-gradient(#999, #999) 3px 0 / 1px 22px no-repeat; }

  .combo { position: relative; display: flex; align-items: center; box-sizing: border-box; height: 20px; background: #fff; border: 1px solid #dedede; }
  .combo select { appearance: none; flex: 1; min-width: 0; width: 0; border: 0; background: none; font-size: 12px; line-height: 16px; color: #222; padding: 0 4px; outline: 0; }
  .combo .chev { margin-right: 4px; }
  .layers { gap: 2px; }
  .bar .combo { height: 21px; }
  .bar .combo select { padding: 0 2px; }
  .bar .layers { width: 298px; margin: 0 4px; }
  .bar .layers select { padding: 0 4px; }
  .bar .style { width: 149px; margin: 0 7px 0 4px; }
  .bar .space { width: 124px; margin-right: 3px; }

  .tabs { flex: none; height: 27px; margin-top: 1px; display: grid; grid-template-columns: 28px 74px 88px 76px 106px 70px 88px 70px 108px; padding-left: 7px; }
  .tabs button { font-size: 13px; color: #333; }
  .tabs .active { background: #f0f0f0; }
  .tabs .logo svg { width: 28px; height: 27px; }

  .ribbon { flex: none; height: 93px; display: flex; background: #f0f0f0; }
  .grip.rg { width: 7px; margin: 0; align-self: center; background-position: 3px 6px; }
  .groups { flex: 1; display: grid; grid-template-columns: 297fr 343fr 190fr 291fr 237fr 217fr 137fr 106fr 75fr; padding-right: 8px; }
  section { display: flex; flex-direction: column; min-width: 0; border-right: 1px solid #e0e0e0; box-sizing: border-box; }
  section:last-child { border-right: 0; }
  h2 { margin: 0; font-size: 12px; line-height: 16px; font-weight: 700; text-align: center; }
  .body { height: 73px; display: flex; align-items: flex-start; padding-top: 5px; box-sizing: border-box; }
  .big { display: flex; flex-direction: column; align-items: center; min-width: 46px; }
  .big span { font-size: 11px; line-height: 15px; }
  .big .second { display: flex; align-items: center; gap: 3px; min-height: 14px; }
  .col { display: flex; flex-direction: column; align-items: flex-start; gap: 2px; }
  .small { display: flex; align-items: center; height: 20px; padding: 0 2px; gap: 3px; font-size: 11px; }
  .small .tri { margin-left: 1px; }
  .lit { background: #cde0f4; box-shadow: inset 0 0 0 1px #6aa5e8; }
  .g-draw { padding-left: 11px; }
  .g-mod { padding-left: 13px; }
  .w81 { width: 81px; }
  .g-mod .col:nth-child(2) { margin-left: 4px; }
  .g-ann { padding-left: 12px; gap: 6px; }
  .g-lay { padding-left: 9px; padding-right: 14px; }
  .grow { flex: 1; min-width: 0; align-items: stretch; }
  .line { display: flex; align-items: center; }
  .line .combo { flex: 1; }
  .spread { gap: 4px; }
  .g-blk { padding-left: 13px; }
  .g-blk .col:nth-child(2) { margin-left: 5px; width: 120px; }
  .g-prp { padding: 5px 10px 0 14px; }
  .g-prp .grow { margin-left: 6px; }
  .g-prp .combo { padding-left: 4px; }
  .combo .vl { padding-right: 0; }
  .rule { flex: none; width: 60px; height: 1px; background: #222; }
  .g-grp { padding-left: 14px; gap: 7px; }
  .g-utl { padding-left: 13px; gap: 4px; }
  .g-cmp { justify-content: center; }

  .main { flex: 1; min-height: 0; display: flex; }
  .work { flex: 1; min-width: 0; display: flex; flex-direction: column; }
  .doctabs { flex: none; height: 16px; display: flex; padding-left: 7px; }
  .doctabs button { font-size: 11px; line-height: 16px; padding: 0 5px; color: #444; }
  .doctabs .x { width: 25px; display: grid; place-items: center; margin-left: 2px; }
  .doctabs .x svg { width: 10px; height: 10px; }
  .doctabs .cur { font-weight: 700; background: #efefef; color: #222; padding: 0 9px 0 11px; }
  .doctabs .lit2 { margin-left: 0; background: #efefef; }
  .canvas { position: relative; flex: 1; min-height: 0; border-top: 2px solid #a4a4a4; border-right: 2px solid #b0b0b0; background: #fff; }
  .drawing { position: absolute; inset: 0; width: 100%; height: 100%; }
  .wcs { font-family: "Liberation Sans", sans-serif; font-size: 14px; fill: #333; }
  .look { position: absolute; top: 10px; right: 10px; width: 78px; height: 78px; }
  .sheets { flex: none; height: 16px; display: flex; border-top: 1px solid #ddd; border-bottom: 2px solid #999; }
  .sheets button { padding: 0 5px; font-size: 11px; line-height: 16px; }
  .sheets .nav { width: 17px; padding: 0; display: grid; place-items: center; border-right: 1px solid #bbb; box-sizing: border-box; }
  .nav svg { width: 10px; height: 10px; }
  .sheets .model { font-weight: 700; background: #ececec; padding: 0 3px 0 2px; }
  .cmd { flex: none; display: flex; border-top: 2px solid #ccc; }
  .cmdgrip { width: 7px; background: #f0f0f0; }
  .cmdgrip svg { width: 7px; height: 76px; }
  .console { flex: 1; display: flex; flex-direction: column; }
  .log { background: #828282; color: #f4f4f4; padding: 9px 6px 7px; }
  .log p { margin: 0; font: 12px/15px "DejaVu Sans Mono", monospace; }
  .console input { height: 20px; border: 0; padding: 0 6px; background: #353638; color: #fff; }

  .panel { flex: none; width: 278px; display: flex; flex-direction: column; background: #fff; }
  .phandle { height: 10px; background: #f0f0f0 repeating-linear-gradient(90deg, #777 0 2px, transparent 2px 4px) 152px 3px / 18px 2px no-repeat; }
  .picker { display: flex; height: 24px; align-items: center; padding-left: 2px; gap: 2px; }
  .picker .sel { width: 225px; height: 22px; }
  .picker .sel select { padding: 0 2px; font-size: 11px; }
  .picker button { width: 23px; height: 22px; display: grid; place-items: center; }
  .picker .on { background: #cde6f9; }
  table { margin-top: 1px; border-collapse: collapse; table-layout: fixed; width: 100%; font-size: 11px; line-height: 17px; }
  th, td { height: 17px; padding: 0 4px; text-align: left; font-weight: 400; white-space: nowrap; overflow: hidden; border-bottom: 1px solid #d6d6d6; }
  th { border-right: 1px solid #d6d6d6; padding: 0 0 0 3px; }
  .c1 { width: 16px; }
  .c2 { width: 86px; }
  .gut { padding: 0; border: 0; }
  .gut svg { width: 9px; height: 9px; margin-left: 4px; }
  .head th { background: #d3d3d3; font-weight: 700; font-size: 12px; border-color: #d3d3d3; }
  td.dim { color: #8a8a8a; }
  .sw { display: inline-block; width: 11px; height: 11px; border: 1px solid #333; margin: 0 6px 0 2px; vertical-align: -2px; }
  .ln { display: inline-block; width: 89px; height: 1px; background: #222; margin: 0 4px 0 2px; vertical-align: 4px; }

  .side { flex: none; width: 48px; background: #f0f0f0; padding-top: 7px; border-bottom: 1px solid #e4e4e4; box-sizing: border-box; }
  .side button { display: grid; place-items: center; width: 48px; height: 50px; padding-left: 4px; }
  .side .active { background: #fff; }
  .side svg { width: 36px; height: 29px; }
  .side em { font: italic 18px "Liberation Serif", serif; color: #999; }

  footer { flex: none; height: 21px; display: flex; align-items: center; font-size: 11px; color: #444; box-sizing: border-box; background: #fff; border-bottom: 2px solid #3a3a3c; }
  footer button { padding: 0 4px; font-size: 11px; border-left: 1px solid #d4d4d4; }
  .off { color: #c4c4c4; }
  .pressed { background: #cfcfcf; }
  .msg { flex: 1; padding-left: 2px; }
  .coord { width: 176px; padding-right: 4px; text-align: right; border-left: 1px solid #ddd; }
  .auto { width: 44px; }
  .more { width: 22px; }
  .more .tri { margin: 0 auto; width: 10px; height: 10px; }
  .size { width: 10px; height: 10px; margin-left: 30px; }

  .popup { position: absolute; right: 296px; bottom: 11px; width: 260px; box-sizing: border-box; padding: 2px 1px; background: #f1f1f1; border: 1px solid #b8b8b8; box-shadow: 2px 2px 3px #0008; color: #111; }
  .popup button { display: flex; align-items: center; width: 100%; height: 22px; padding-left: 4px; gap: 13px; font-size: 11px; }
  .popup hr { margin: 2px 5px 3px 26px; border: 0; border-top: 1px solid #d7d7d7; }
  .pic { width: 16px; height: 16px; }
  .boxed { background: #fff; box-shadow: 0 0 0 1px #333; }
  .sub { width: 8px; height: 8px; margin: 0 10px 0 auto; }
  .mouse { position: absolute; right: 543px; bottom: 0; width: 12px; height: 12px; }
</style>
